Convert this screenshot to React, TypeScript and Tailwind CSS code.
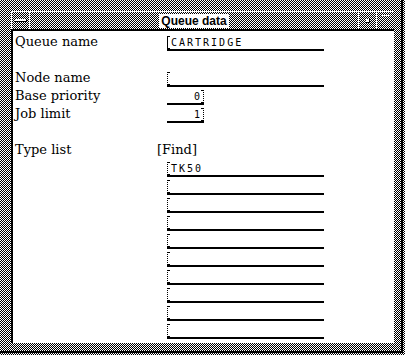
import React from "react";

const dither =
  "bg-[image:repeating-conic-gradient(#000_0_25%,#fff_0_50%)] bg-[length:2px_2px]";

function Cursor({ solid = false, right = false }: { solid?: boolean; right?: boolean }) {
  const dash = solid ? undefined : "1 1";
  return (
    <svg width="4" height="13" viewBox="0 0 4 13" className="shrink-0 block" shapeRendering="crispEdges">
      {right ? (
        <>
          <path d="M3.5 0 V13" stroke="#000" strokeWidth="1" strokeDasharray={dash} />
          <path d="M1 0.5 H3 M1 12.5 H3" stroke="#000" strokeWidth="1" />
        </>
      ) : (
        <>
          <path d="M0.5 0 V13" stroke="#000" strokeWidth="1" strokeDasharray={dash} />
          <path d="M1 0.5 H3 M1 12.5 H3" stroke="#000" strokeWidth="1" />
        </>
      )}
    </svg>
  );
}

function TextField({ value = "", focused = false }: { value?: string; focused?: boolean }) {
  return (
    <div className="w-[157px] h-[18px] border-b-2 border-black flex items-end">
      <Cursor solid={focused} />
      {value && (
        <span className="font-['DejaVu_Sans_Mono',monospace] text-[10px] leading-[13px] tracking-[2px] text-black">
          {value}
        </span>
      )}
    </div>
  );
}

function NumberField({ value }: { value: string }) {
  return (
    <div className="w-[37px] h-[18px] border-b-2 border-black flex items-end justify-end">
      <span className="font-['DejaVu_Sans_Mono',monospace] text-[10px] leading-[13px] text-black">{value}</span>
      <Cursor right />
    </div>
  );
}

function Row({ label, children }: { label?: string; children?: React.ReactNode }) {
  return (
    <div className="h-[18px] flex items-start">
      <div className="w-[152px] shrink-0 leading-[17px]">{label}</div>
      {children}
    </div>
  );
}

export default function App() {
  const typeList = ["TK50", "", "", "", "", "", "", "", "", ""];

  return (
    <div className={`w-[405px] h-[355px] pr-[2px] pb-[2px] ${dither}`}>
      <div className="h-full flex flex-col border-r-2 border-b-2 border-black pl-[11px] pt-[11px] pr-[7px] pb-[8px]">
        {/* title bar */}
        <div className="h-[18px] flex border-t border-white">
          <div className="w-[18px] flex items-center justify-center border-l border-white">
            <div className="w-[12px] h-[3px] bg-white border-b border-r border-black" />
          </div>
          <div className="flex-1 flex items-center justify-center border-l border-white">
            <span className="bg-white px-[2px] h-[14px] leading-[14px] font-['Liberation_Sans',sans-serif] font-bold text-[12px] text-black">
              Queue data
            </span>
          </div>
          <div className="w-[18px] flex items-center justify-center border-l border-white">
            <div className="w-[4px] h-[4px] bg-white border-r border-b border-black" />
          </div>
          <div className="w-[18px] flex items-center justify-center border-l border-white">
            <div className="w-[10px] h-[11px] border-t border-l border-white border-r border-b border-dotted border-r-black border-b-black" />
          </div>
        </div>

        {/* content */}
        <div className="flex-1 bg-white border-t-2 border-l-2 border-black pl-[2px] pt-[2px] font-['DejaVu_Serif',serif] text-[13px] text-black">
          <Row label="Queue name">
            <TextField value="CARTRIDGE" focused />
          </Row>
          <Row />
          <Row label="Node name">
            <TextField />
          </Row>
          <Row label="Base priority">
            <NumberField value="0" />
          </Row>
          <Row label="Job limit">
            <NumberField value="1" />
          </Row>
          <Row />
          <div className="h-[18px] flex items-start leading-[17px]">
            <div className="w-[142px] shrink-0">Type list</div>
            <div>[Find]</div>
          </div>
          {typeList.map((t, i) => (
            <Row key={i}>
              <TextField value={t} />
            </Row>
          ))}
        </div>
      </div>
    </div>
  );
}
